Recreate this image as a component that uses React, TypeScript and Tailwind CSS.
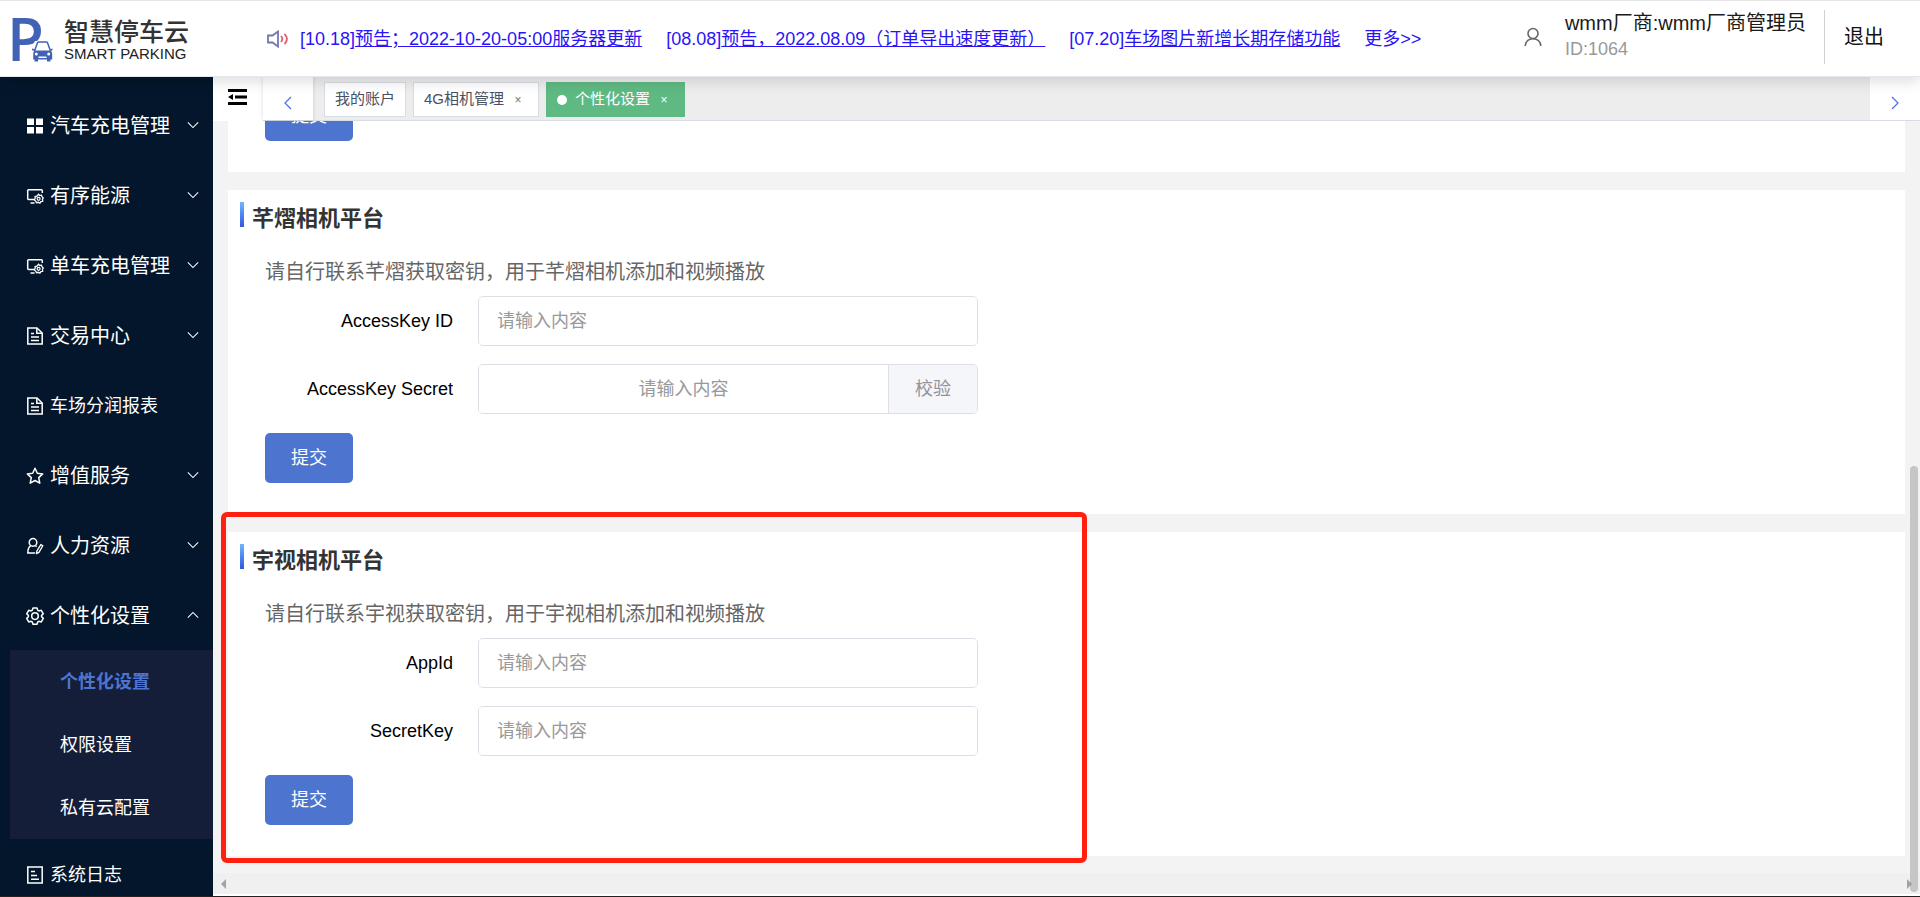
import React, { useState } from 'react';

type IconName = 'grid' | 'monitor' | 'doc' | 'star' | 'staff' | 'gear' | 'log';

interface MenuItem {
  label: string;
  icon: IconName;
  small?: boolean;
  expandable?: boolean;
  children?: string[];
}

const MENU: MenuItem[] = [
  { label: '汽车充电管理', icon: 'grid', expandable: true },
  { label: '有序能源', icon: 'monitor', expandable: true },
  { label: '单车充电管理', icon: 'monitor', expandable: true },
  { label: '交易中心', icon: 'doc', expandable: true },
  { label: '车场分润报表', icon: 'doc', small: true },
  { label: '增值服务', icon: 'star', expandable: true },
  { label: '人力资源', icon: 'staff', expandable: true },
  { label: '个性化设置', icon: 'gear', expandable: true, children: ['个性化设置', '权限设置', '私有云配置'] },
  { label: '系统日志', icon: 'log', small: true },
];

const NOTICES = [
  { date: '[10.18]', title: '预告；2022-10-20-05:00服务器更新' },
  { date: '[08.08]', title: '预告，2022.08.09（订单导出速度更新）' },
  { date: '[07.20]', title: '车场图片新增长期存储功能' },
];

function MenuIcon({ name }: { name: IconName }) {
  return (
    <svg viewBox="0 0 18 18" className="w-[18px] h-[18px] shrink-0" fill="none" stroke="currentColor" strokeWidth="1.5">
      {name === 'grid' && (
        <g fill="currentColor" stroke="none">
          <rect x="1" y="1.5" width="7" height="6.5" />
          <rect x="10" y="1.5" width="7" height="6.5" />
          <rect x="1" y="10" width="7" height="6.5" />
          <rect x="10" y="10" width="7" height="6.5" />
        </g>
      )}
      {name === 'monitor' && (
        <>
          <path d="M8 12.5H2.6c-.5 0-.9-.4-.9-.9V3.6c0-.5.4-.9.9-.9h12.8c.5 0 .9.4.9.9V6M4.5 16h4" />
          <path d="M12.5 7.2l1.2 1.3 1.8-.3.6 1.7 1.2 1.1-.9 1.4.3 1.9-1.8.4-1 1.4-1.6-.8-1.8.4-.8-1.6-1.4-1.2.9-1.5-.1-1.8 1.9-.4z" strokeWidth="1.3" />
          <circle cx="12.6" cy="11.8" r="1.5" strokeWidth="1.2" />
        </>
      )}
      {name === 'doc' && (
        <>
          <path d="M1.8 1H11l5.2 5v11H1.8z" />
          <path d="M10.8 1v5.2h5.4M5 6.5h3M5 10h8M5 13.4h8" />
        </>
      )}
      {name === 'star' && (
        <path strokeLinejoin="round" d="M9 1.3l2.3 5 5.4.6-4 3.7 1.1 5.6L9 13.5l-4.8 2.7 1.1-5.6-4-3.7 5.4-.6z" />
      )}
      {name === 'staff' && (
        <>
          <circle cx="7" cy="5.4" r="3.8" />
          <path d="M4.8 8.6C2.8 9.8 1.8 12 1.8 16h7.4M9.5 9l1.2.6" />
          <path d="M14.8 7.6l2 1.2-3.9 6.6-2.3 1 .2-2.3z" strokeWidth="1.3" />
        </>
      )}
      {name === 'gear' && (
        <>
          <path strokeLinejoin="round" d="M7 .9h4l.7 2.3 1.2.7 2.4-.6 2 3.5-1.7 1.6v1.3l1.7 1.700-2 3.500-2.400-.6-1.200.7-.7 2.200H7l-.7-2.200-1.200-.7-2.400.6-2-3.500 1.700-1.700V8.400L.7 6.800l2-3.500 2.400.6 1.200-.7z" />
          <circle cx="9" cy="9.1" r="3.3" />
        </>
      )}
      {name === 'log' && (
        <>
          <rect x="1.8" y="1" width="14.4" height="16" />
          <path d="M5 5.5h4M5 9.5h6M5 13.2h8" />
        </>
      )}
    </svg>
  );
}

function Chevron({ dir, className }: { dir: 'up' | 'down' | 'left' | 'right'; className?: string }) {
  const d = {
    up: 'M1 10l6-6 6 6',
    down: 'M1 4l6 6 6-6',
    left: 'M10 1L4 7l6 6',
    right: 'M4 1l6 6-6 6',
  }[dir];
  return (
    <svg viewBox="0 0 14 14" className={className} fill="none" stroke="currentColor" strokeWidth="1.2">
      <path d={d} />
    </svg>
  );
}

function Logo() {
  return (
    <div className="flex items-center gap-3 pl-3 pt-0.5">
      <svg viewBox="0 0 40 44" className="w-10 h-11 shrink-0 overflow-visible" aria-hidden="true">
        <text x="-5" y="43" fontFamily="Open Sans" fontWeight="600" fontSize="60" fill="#4262b5">P</text>
        <path d="M19 45V31l4-8h14l4 8v14z" fill="#fff" />
        <path d="M22.500 33l3-8.200c.2-.5.5-.8 1-.8h8c.5 0 .8.300 1 .8l3 8.200" fill="none" stroke="#4262b5" strokeWidth="1.500" />
        <path d="M20 30.500l3 .8v1.200h15l.1-1.200 2.400-.8v1.700l-1.500.6c.8.9 1.200 2 1.200 3.300v5.400h-19v-5.400c0-1.300.3-2.400 1-3.300l-2.200-.6z" fill="#4262b5" />
        <path d="M22.500 40h3.500v3.500h-3.500zM35 40h3.500v3.500H35z" fill="#4262b5" />
        <path d="M26.500 38.500h8v1.500h-8z" fill="#fff" />
        <circle cx="24.3" cy="36" r="1.5" fill="#fff" />
        <circle cx="36.7" cy="36" r="1.5" fill="#fff" />
      </svg>
      <div className="text-[#333]">
        <div className="text-[25px] leading-7 font-medium">智慧停车云</div>
        <div className="text-[15px] leading-4 text-[#222]">SMART PARKING</div>
      </div>
    </div>
  );
}

function Header() {
  return (
    <header className="relative z-20 flex items-center h-[77px] shrink-0 bg-white border-t border-t-[#e5e5e5] border-b border-b-[#e6e8f0] shadow-[0_4px_14px_rgba(0,0,0,0.14)]">
      <div className="w-[267px] shrink-0">
        <Logo />
      </div>
      <svg viewBox="0 0 22 18" className="w-[22px] h-[18px] shrink-0" fill="none" strokeWidth="1.8">
        <path d="M1 5.500h4.500L11 1.500v15l-5.500-4H1z" stroke="#7377ae" />
        <path d="M14 6c1.600 1.800 1.600 4.200 0 6M17.500 3.800c3 3.200 3 7.200 0 10.400" stroke="#e0606e" />
      </svg>
      <nav className="flex items-center gap-6 pl-[11px] text-lg text-[#2a14f5] whitespace-nowrap">
        {NOTICES.map(n => (
          <a key={n.date} href="#">
            {n.date}<span className="underline">{n.title}</span>
          </a>
        ))}
        <a href="#">更多&gt;&gt;</a>
      </nav>
      <div className="ml-auto flex items-center pr-9 pb-[3px]">
        <svg viewBox="0 0 18 20" className="w-[18px] h-5 mr-[23px]" fill="none" stroke="#666" strokeWidth="1.6">
          <circle cx="9" cy="6.5" r="5" />
          <path d="M1.200 19c.3-4.500 3.500-7.300 7.800-7.300s7.500 2.800 7.800 7.300" />
        </svg>
        <div className="pr-[18px] pb-1">
          <div className="text-xl leading-7 text-[#1a1a1a]">wmm厂商:wmm厂商管理员</div>
          <div className="text-lg leading-6 text-[#999]">ID:1064</div>
        </div>
        <button className="h-[54px] border-l border-[#d0d0d0] pl-[19px] text-xl text-[#111]">退出</button>
      </div>
    </header>
  );
}

function Sidebar() {
  const [open, setOpen] = useState('个性化设置');
  return (
    <aside className="w-[213px] shrink-0 overflow-hidden bg-[#04162b] pt-[13px] text-white">
      {MENU.map(item => (
        <div key={item.label}>
          <button
            onClick={() => item.children && setOpen(open === item.label ? '' : item.label)}
            className="flex items-center gap-1.5 w-full h-[70px] pt-0.5 pl-[26px] pr-[14px] text-left"
          >
            <MenuIcon name={item.icon} />
            <span className={item.small ? 'text-lg' : 'text-xl'}>{item.label}</span>
            {item.expandable && (
              <Chevron dir={open === item.label ? 'up' : 'down'} className="w-3 h-3 ml-auto mb-0.5" />
            )}
          </button>
          {item.children && open === item.label && (
            <div className="ml-2.5 bg-[#141e38]">
              {item.children.map((child, i) => (
                <a
                  key={child}
                  href="#"
                  className={`flex items-center h-[63px] pl-[50px] text-lg ${i === 0 ? 'font-bold text-[#4d74d0]' : ''}`}
                >
                  {child}
                </a>
              ))}
            </div>
          )}
        </div>
      ))}
    </aside>
  );
}

function TabBar() {
  return (
    <div className="flex h-11 shrink-0">
      <button aria-label="menu" className="w-[50px] shrink-0 flex items-center justify-center bg-white">
        <svg viewBox="0 0 20 18" className="w-5 h-[18px] mb-1" fill="#000">
          <path d="M0 1h19v3H0zM7 7.500h12v3H7zM0 14h19v3H0zM0 9l5-3v6z" />
        </svg>
      </button>
      <div className="flex flex-1 border-b border-[#d8dce5] bg-[#ededed]">
        <button aria-label="prev" className="w-[50px] flex items-center justify-center bg-white pt-2 text-[#4a6cf0] shadow-[0_0_4px_rgba(0,0,0,0.15)]">
          <Chevron dir="left" className="w-[14px] h-[14px]" />
        </button>
        <div className="flex flex-1 gap-[7px] pt-[5px] pl-[11px] text-[15px] text-[#495060]">
          <a href="#" className="flex items-center h-[35px] px-2.5 border border-[#d8dce5] bg-white">我的账户</a>
          <div className="flex items-center h-[35px] px-2.5 border border-[#d8dce5] bg-white">
            <a href="#">4G相机管理</a>
            <button className="w-6 pl-1 text-xs text-[#777]">×</button>
          </div>
          <div className="flex items-center h-[35px] px-2.5 border border-[#5fb982] bg-[#5fb982] text-white">
            <span className="w-2.5 h-2.5 mr-2 rounded-full bg-white" />
            <a href="#">个性化设置</a>
            <button className="w-6 pl-1 text-xs">×</button>
          </div>
        </div>
        <button aria-label="next" className="w-[50px] flex items-center justify-center bg-white pt-2 text-[#4a6cf0]">
          <Chevron dir="right" className="w-[14px] h-[14px]" />
        </button>
      </div>
    </div>
  );
}

function SubmitButton() {
  return (
    <button className="block w-[88px] h-[50px] rounded-[5px] bg-[#4d75d0] text-lg text-white">提交</button>
  );
}

interface FieldProps {
  id: string;
  label: string;
  action?: string;
}

function Field({ id, label, action }: FieldProps) {
  return (
    <div className="flex items-center">
      <label htmlFor={id} className="w-[213px] pr-[25px] text-right text-lg text-black">{label}</label>
      <div className="flex w-[500px] h-[50px] rounded-[5px] border border-[#dcdfe6] overflow-hidden">
        <input
          id={id}
          type="text"
          placeholder="请输入内容"
          className={`flex-1 min-w-0 px-[18px] text-lg bg-white placeholder:text-[#999] focus:outline-none ${action ? 'text-center' : ''}`}
        />
        {action && (
          <button className="w-[89px] border-l border-[#dcdfe6] bg-[#f4f6fa] text-lg text-[#909399]">{action}</button>
        )}
      </div>
    </div>
  );
}

interface PlatformCardProps {
  name: string;
  fields: FieldProps[];
  highlighted?: boolean;
}

function PlatformCard({ name, fields, highlighted }: PlatformCardProps) {
  return (
    <section className="relative shrink-0 bg-white pt-3 pb-[31px]">
      <div className="flex pl-3">
        <span className="w-1 h-[25px] bg-linear-to-b from-[#6fb6fc] to-[#3455dc]" />
        <h2 className="pl-2 pt-px text-[22px] leading-8 font-bold text-[#333]">{name}相机平台</h2>
      </div>
      <div className="pl-[37px]">
        <p className="pt-[22px] pb-[9px] text-xl leading-[30px] text-[#666]">
          请自行联系{name}获取密钥，用于{name}相机添加和视频播放
        </p>
        <div className="flex flex-col gap-[18px] pb-[19px]">
          {fields.map(f => <Field key={f.id} {...f} />)}
        </div>
        <SubmitButton />
      </div>
      {highlighted && (
        <div className="pointer-events-none absolute -top-5 -left-[7px] w-[866px] h-[351px] rounded-md border-[5px] border-[#ff2012]" />
      )}
    </section>
  );
}

export default function App() {
  return (
    <div
      className="flex flex-col h-screen overflow-hidden bg-white border-b border-[#222]"
      style={{ fontFamily: '"Liberation Sans", "Noto Sans CJK SC", sans-serif' }}
    >
      <Header />
      <div className="flex flex-1 min-h-0">
        <Sidebar />
        <main className="relative flex flex-col flex-1 min-w-0 pb-0.5">
          <TabBar />

          {/* Scrolled to the end */}
          <div className="flex flex-col justify-end flex-1 min-h-0 gap-[18px] overflow-hidden bg-[#f3f3f3] px-[15px] pb-[17px]">
            <section className="shrink-0 bg-white pt-8 pl-[37px] pb-[31px]">
              <SubmitButton />
            </section>
            <PlatformCard
              name="芊熠"
              fields={[
                { id: 'access-key-id', label: 'AccessKey ID' },
                { id: 'access-key-secret', label: 'AccessKey Secret', action: '校验' },
              ]}
            />
            <PlatformCard
              name="宇视"
              highlighted
              fields={[
                { id: 'app-id', label: 'AppId' },
                { id: 'secret-key', label: 'SecretKey' },
              ]}
            />
          </div>

          {/* Horizontal scroll track */}
          <div className="flex items-center justify-between h-[21px] shrink-0 px-2 bg-[#f0f0f0]">
            <svg viewBox="0 0 5 10" className="w-[5px] h-2.5" fill="#a3a3a3"><path d="M5 0v10L0 5z" /></svg>
            <svg viewBox="0 0 5 10" className="w-[5px] h-2.5" fill="#a3a3a3"><path d="M0 0v10l5-5z" /></svg>
          </div>
          <div className="absolute right-0.5 bottom-1 w-2 h-[426px] rounded-full bg-[#909090]/45" />
        </main>
      </div>
    </div>
  );
}
